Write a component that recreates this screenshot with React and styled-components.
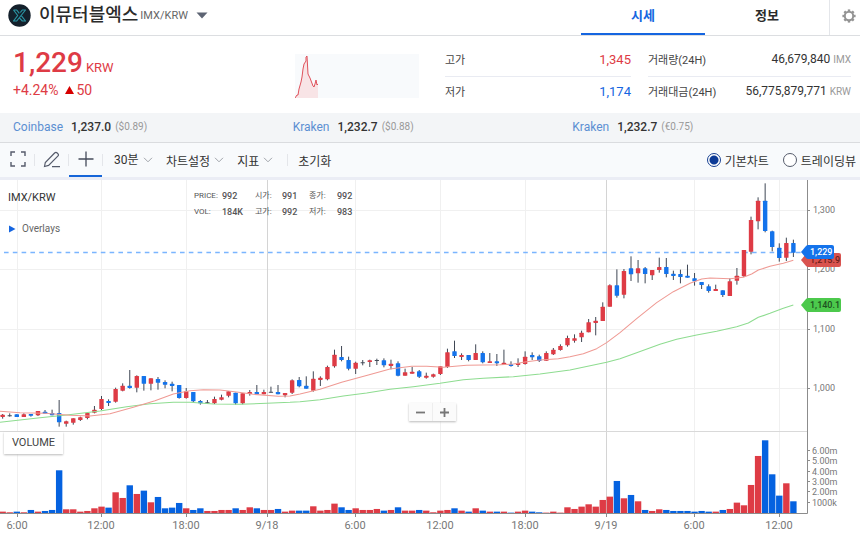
import React, { useState } from 'react'
import styled, { createGlobalStyle } from 'styled-components'

const GlobalStyle = createGlobalStyle`
  * {
    box-sizing: border-box;
  }
  body {
    margin: 0;
    background: #fff;
    color: #333;
    font-family: Roboto, 'Noto Sans CJK KR', sans-serif;
    font-size: 12px;
  }
  h1, dl, dd {
    margin: 0;
  }
  button, select {
    margin: 0;
    padding: 0;
    border: 0;
    background: none;
    color: inherit;
    font: inherit;
    cursor: pointer;
  }
  svg {
    display: block;
  }
`

const UP = '#de3b45'
const DOWN = '#1473eb'

/* header */

const Header = styled.header`
  display: flex;
  height: 36px;
  border-bottom: 1px solid #dcdee1;
`

const Coin = styled.div`
  flex: 1;
  display: flex;
  align-items: center;
  padding: 0 0 5px 8px;
`

const CoinName = styled.h1`
  margin-left: 8px;
  font-size: 18px;
  font-weight: 500;
  line-height: 24px;
  color: #2b2b2b;
`

const CoinPair = styled.span`
  margin: 0 8px 0 2px;
  font-size: 11px;
  color: #666;
`

const Tabs = styled.nav`
  display: flex;
`

const Tab = styled.button`
  width: 124px;
  height: 35px;
  padding-bottom: 4px;
  border-bottom: 2px solid ${({ $active }) => $active ? '#1565e0' : 'transparent'};
  color: ${({ $active }) => $active ? '#1565e0' : '#2b2b2b'};
  font-size: 13px;
  font-weight: 700;
`

const GearButton = styled.button`
  display: flex;
  align-items: center;
  width: 31px;
  padding-left: 12px;
  padding-bottom: 4px;
  border-left: 1px solid #e4e6ea;
`

/* price summary */

const Summary = styled.section`
  display: flex;
  height: 77px;
`

const PriceBlock = styled.div`
  width: 295px;
  padding: 10px 0 0 13px;
  color: ${UP};
`

const Price = styled.div`
  display: flex;
  align-items: baseline;
  gap: 3px;
  height: 33px;
  font-size: 28px;
  line-height: 33px;
  strong {
    font-weight: 500;
  }
  span {
    font-size: 13px;
  }
`

const Change = styled.div`
  display: flex;
  align-items: center;
  gap: 6px;
  font-size: 14px;
  line-height: 22px;
  span {
    display: flex;
    align-items: center;
    gap: 3px;
  }
`

const Spark = styled.div`
  width: 124px;
  height: 44px;
  margin-top: 18px;
  background: #f8fafc;
`

const Stats = styled.dl`
  flex: 1;
  display: grid;
  grid-template-columns: 186fr 203fr;
  grid-template-rows: 33px 28px;
  column-gap: 17px;
  padding: 8px 9px 0 26px;
`

const Stat = styled.div`
  display: flex;
  align-items: center;
  justify-content: space-between;
  padding-bottom: ${({ $line }) => $line ? 2 : 0}px;
  border-bottom: ${({ $line }) => $line ? '1px solid #e9ebf2' : 0};
  dt {
    font-size: 11px;
    color: #444;
  }
  dd {
    font-size: ${({ $color }) => $color ? 13 : 12}px;
    color: ${({ $color }) => $color || '#333'};
  }
  small {
    margin-left: 3px;
    font-size: 10px;
    color: #999;
  }
`

/* other exchanges */

const Exchanges = styled.section`
  display: grid;
  grid-template-columns: repeat(3, 1fr);
  align-items: center;
  height: 30px;
  padding: 0 8px 2px 13px;
  background: #f3f5f7;
  border-bottom: 1px solid #dadcdf;
`

const Exchange = styled.div`
  display: flex;
  align-items: center;
  a {
    margin-right: 8px;
    color: #5b8fd2;
    text-decoration: none;
  }
  b {
    margin-right: 4px;
    font-weight: 500;
  }
  span {
    font-size: 10px;
    color: #999;
  }
`

/* chart toolbar */

const Toolbar = styled.div`
  display: flex;
  justify-content: space-between;
  height: 37px;
  padding: 0 4px 0 1px;
  background: #f8fafc;
  border-bottom: 3px solid #ebedf5;
`

const Tools = styled.div`
  display: flex;
  align-items: center;
`

const IconTool = styled.button`
  display: flex;
  align-items: center;
  justify-content: center;
  width: 33px;
  height: 34px;
  border-bottom: 2px solid ${({ $active }) => $active ? '#1565d8' : 'transparent'};
`

const Divider = styled.i`
  width: 1px;
  height: 12px;
  background: #e4e6ea;
`

const MenuButton = styled.button`
  display: flex;
  align-items: center;
  gap: 4px;
  margin-left: 13px;
`

const Interval = styled.label`
  display: flex;
  align-items: center;
  gap: 4px;
  margin-left: 11px;
  select {
    appearance: none;
  }
`

const ResetButton = styled.button`
  margin-left: 10px;
`

const MenuDivider = styled(Divider)`
  margin-left: 14px;
`

const ChartTypes = styled.div`
  display: flex;
  align-items: center;
  gap: 14px;
`

const Radio = styled.label`
  display: flex;
  align-items: center;
  gap: 4px;
  input {
    appearance: none;
    width: 14px;
    height: 14px;
    margin: 0;
    border: 1px solid #555b6b;
    border-radius: 50%;
    background: #fff;
  }
  input:checked {
    border-color: #174093;
    background: radial-gradient(#0c3a96 4px, #fff 5px);
  }
`

/* chart */

const ChartArea = styled.section`
  position: relative;
  > svg {
    width: 100%;
    height: auto;
  }
`

const ChartInfo = styled.div`
  position: absolute;
  top: 10px;
  left: 8px;
  font-size: 11px;
  line-height: 16px;
  color: #333;
`

const OverlaysButton = styled.button`
  display: flex;
  align-items: center;
  gap: 6px;
  margin-top: 15px;
  font-size: 10px;
  line-height: 16px;
  color: #666;
`

const Quote = styled.dl`
  position: absolute;
  top: 8px;
  left: 194px;
  display: grid;
  grid-template-columns: 28px 33px 27px 27px 28px 20px;
  font-size: 9px;
  line-height: 16px;
  color: #555;
  div {
    display: contents;
  }
  dt {
    font-size: 8px;
  }
  dd {
    font-weight: 500;
  }
`

const ZoomButtons = styled.div`
  position: absolute;
  top: 223px;
  left: 409px;
  display: flex;
  width: 47px;
  height: 18px;
  background: #fbfbfb;
  box-shadow: 0 1px 2px #bbb;
  button {
    flex: 1;
    display: flex;
    align-items: center;
    justify-content: center;
  }
  button + button {
    border-left: 1px solid #eee;
  }
`

const VolumeLabel = styled.div`
  position: absolute;
  top: 252px;
  left: 4px;
  width: 59px;
  background: #fff;
  box-shadow: 0 1px 2px #bbb;
  font-size: 11px;
  line-height: 22px;
  text-align: center;
  color: #444;
`

// [kind, body top, body bottom, high, low, volume], in thirds of a plot unit
// kind: 1 up, 0 down, 2 flat
const candles = [
  [1, 704, 711, 702, 716, 5], [2, 706, 709, 700, 710, 3], [0, 703, 711, 703, 711, 5],
  [1, 703, 711, 700, 711, 3], [0, 702, 707, 702, 710, 10], [1, 693, 706, 693, 708, 5],
  [0, 695, 701, 690, 701, 7], [0, 699, 706, 689, 706, 10], [0, 699, 727, 660, 740, 129],
  [1, 724, 731, 722, 740, 12], [1, 715, 728, 715, 734, 12], [1, 712, 720, 710, 723, 5],
  [1, 699, 714, 699, 718, 7], [1, 689, 698, 678, 700, 15], [1, 657, 687, 648, 690, 20],
  [0, 663, 669, 658, 678, 17], [1, 627, 665, 623, 668, 63], [1, 617, 632, 610, 634, 46],
  [0, 617, 624, 570, 626, 84], [1, 588, 623, 586, 637, 58], [0, 588, 611, 588, 632, 68],
  [1, 595, 611, 595, 631, 33], [0, 597, 608, 591, 629, 49], [0, 606, 614, 601, 625, 15],
  [0, 611, 618, 605, 634, 17], [0, 615, 654, 615, 656, 31], [1, 634, 654, 624, 656, 15],
  [0, 636, 664, 636, 666, 10], [0, 663, 670, 660, 674, 15], [2, 667, 670, 660, 672, 7],
  [1, 657, 670, 650, 672, 7], [1, 652, 659, 644, 661, 10], [1, 634, 647, 633, 652, 10],
  [0, 638, 670, 638, 674, 15], [1, 640, 670, 640, 673, 10], [1, 636, 642, 630, 647, 18],
  [0, 636, 643, 615, 643, 15], [1, 636, 643, 629, 643, 10], [2, 635, 638, 620, 638, 10],
  [0, 636, 643, 615, 643, 13], [1, 639, 646, 639, 652, 5], [1, 601, 638, 598, 642, 8],
  [0, 600, 619, 591, 622, 8], [0, 617, 626, 589, 626, 8], [1, 596, 632, 574, 635, 21],
  [1, 593, 600, 589, 618, 8], [1, 561, 598, 557, 601, 10], [1, 524, 559, 509, 563, 29],
  [0, 531, 540, 498, 544, 18], [0, 540, 566, 530, 571, 10], [1, 548, 566, 545, 582, 15],
  [2, 547, 550, 540, 556, 10], [1, 541, 546, 539, 561, 10], [2, 540, 543, 536, 555, 13],
  [0, 541, 556, 535, 562, 8], [1, 551, 558, 539, 568, 10], [0, 550, 587, 544, 589, 18],
  [1, 577, 587, 566, 587, 8], [1, 575, 581, 561, 581, 8], [0, 574, 590, 570, 594, 10],
  [1, 587, 593, 578, 596, 8], [1, 583, 590, 581, 593, 3], [1, 559, 582, 559, 585, 8],
  [1, 517, 561, 506, 564, 10], [0, 514, 528, 482, 534, 15], [1, 525, 531, 520, 540, 8],
  [0, 525, 540, 525, 544, 5], [1, 519, 540, 493, 540, 15], [0, 519, 547, 514, 550, 8],
  [1, 544, 549, 519, 549, 5], [0, 544, 550, 522, 558, 5], [1, 548, 555, 509, 555, 5],
  [0, 553, 558, 544, 560, 2], [1, 549, 555, 535, 561, 5], [1, 530, 552, 514, 554, 8],
  [0, 525, 532, 517, 540, 5], [0, 529, 543, 524, 546, 3], [1, 519, 542, 514, 542, 2],
  [1, 509, 523, 504, 525, 5], [1, 498, 510, 493, 512, 2], [1, 474, 496, 467, 500, 18],
  [1, 475, 482, 463, 488, 13], [1, 458, 472, 452, 486, 20], [1, 427, 457, 417, 457, 27],
  [1, 422, 429, 411, 466, 20], [1, 380, 423, 367, 423, 40], [1, 316, 380, 313, 380, 50],
  [0, 316, 347, 268, 353, 97], [1, 273, 344, 267, 355, 45], [0, 265, 283, 229, 303, 55],
  [1, 265, 280, 240, 308, 36], [0, 265, 282, 261, 310, 10], [1, 270, 286, 270, 300, 7],
  [1, 261, 270, 233, 278, 12], [0, 261, 282, 234, 292, 10], [0, 281, 288, 272, 300, 7],
  [0, 282, 291, 269, 310, 7], [0, 287, 293, 254, 293, 7], [0, 295, 304, 279, 317, 5],
  [0, 306, 315, 306, 327, 7], [0, 319, 333, 313, 338, 5], [1, 327, 333, 314, 333, 5],
  [0, 331, 345, 331, 351, 10], [1, 304, 348, 295, 348, 13], [1, 287, 302, 264, 314, 32],
  [1, 210, 289, 210, 291, 24], [1, 120, 215, 110, 223, 85], [1, 62, 124, 52, 148, 172],
  [0, 62, 153, 10, 157, 219], [0, 154, 201, 152, 214, 117], [0, 203, 234, 190, 245, 53],
  [1, 189, 233, 173, 243, 90], [0, 189, 218, 179, 231, 36]
]

const shortAverage = '0,694 60,698 135,700 210,706 270,708 330,701 400,682 465,662 520,642 570,632 610,629 660,630 710,636 760,643 835,649 870,648 900,642 960,628 1025,607 1105,585 1170,567 1235,559 1280,559 1330,562 1400,556 1500,554 1540,552 1575,546 1620,540 1675,536 1710,530 1750,521 1790,506 1820,488 1860,458 1910,416 1970,368 2020,335 2070,310 2105,297 2130,294 2190,296 2230,292 2255,282 2275,270 2310,259 2350,250 2380,241'
const longAverage = '0,727 120,713 200,705 300,693 380,680 450,671 520,667 570,667 640,672 720,673 800,670 870,667 900,665 960,659 1030,648 1100,639 1170,628 1240,620 1320,610 1390,599 1450,595 1540,590 1620,582 1710,570 1820,547 1860,536 1910,518 1980,493 2030,478 2090,465 2150,454 2210,440 2245,429 2275,412 2310,400 2350,385 2380,375'

const priceTicks = [['1,300', 30], ['1,200', 89], ['1,100', 149], ['1,000', 208]]
const volumeTicks = [['6.00m', 271], ['5.00m', 281], ['4.00m', 292], ['3.00m', 302], ['2.00m', 312], ['1000k', 323]]
const timeTicks = [
  ['6:00', 17], ['12:00', 101], ['18:00', 186], ['9/18', 267, true], ['6:00', 355],
  ['12:00', 440], ['18:00', 525], ['9/19', 606, true], ['6:00', 694], ['12:00', 779]
]

const AxisText = styled.text`
  font-size: ${({ $size }) => $size || 9}px;
  fill: #777;
`

const TagText = styled.text`
  font-size: 9px;
  font-weight: 500;
  fill: ${({ $color }) => $color};
`

function Candle ({ x, candle }) {
  const [kind, top, bottom, high, low] = candle
  const color = kind === 2 ? '#444c58' : kind === 1 ? UP : DOWN
  return (
    <g>
      <path d={`M${x} ${high / 3}V${low / 3}`} stroke='#3f4754' />
      <rect x={x - 2.2} y={top / 3} width='4.4' height={(bottom - top) / 3} rx='.5' fill={color} />
    </g>
  )
}

function PriceTag ({ y, width, color, textColor, children }) {
  return (
    <g>
      <path d={`M801 ${y}l5-6q1-1 2-1h${width - 9}q2 0 2 2v10q0 2-2 2h-${width - 9}q-1 0-2-1z`} fill={color} />
      <TagText x='810' y={y + 3} $color={textColor}>{children}</TagText>
    </g>
  )
}

function PriceChart () {
  return (
    <svg viewBox='0 0 860 355' role='img' aria-label='IMX/KRW'>
      {priceTicks.map(([label, y]) => (
        <path key={label} d={`M0 ${y + 0.5}H807`} stroke='#f0f0f0' />
      ))}
      {timeTicks.map(([label, x, day]) => (
        <path key={x} d={`M${x + 0.5} 0V333`} stroke={day ? '#d4d4d4' : '#f0f0f0'} />
      ))}
      <path d='M0 251.5H807' stroke='#d9d9d9' />
      <path d='M4 72.5H807' stroke='#7ab5ff' strokeWidth='1.4' strokeDasharray='4.6 4.2' />
      {candles.map((candle, i) => {
        const x = 2.67 + i * 7.06
        return (
          <g key={i}>
            <rect
              x={x - 3.2}
              y={333.3 - candle[5] / 3}
              width='6.4'
              height={candle[5] / 3}
              fill={candle[0] ? '#de3b45' : '#0562e0'}
            />
            <Candle x={x} candle={candle} />
          </g>
        )
      })}
      <g transform='scale(.33333)' fill='none' strokeWidth='3.2' strokeLinejoin='round'>
        <polyline points={longAverage} stroke='#8edc90' />
        <polyline points={shortAverage} stroke='#ef9a94' />
      </g>
      <path d='M0 333.5H807.5V0' fill='none' stroke='#8c8c8c' />
      {priceTicks.map(([label, y]) => (
        <g key={label}>
          <path d={`M807 ${y + 0.5}h3`} stroke='#8c8c8c' />
          <AxisText x='813' y={y + 3}>{label}</AxisText>
        </g>
      ))}
      {volumeTicks.map(([label, y]) => (
        <g key={label}>
          <path d={`M807 ${y - 0.5}h3`} stroke='#8c8c8c' />
          <AxisText x='812' y={y + 3}>{label}</AxisText>
        </g>
      ))}
      {timeTicks.map(([label, x]) => (
        <g key={x}>
          <path d={`M${x + 0.5} 333v4`} stroke='#8c8c8c' />
          <AxisText x={x} y='349' textAnchor='middle' $size={11}>{label}</AxisText>
        </g>
      ))}
      <PriceTag y={80} width={40} color='#d9534f' textColor='#6b1f1c'>1,215.9</PriceTag>
      <PriceTag y={72} width={33} color='#1473eb' textColor='#fff'>1,229</PriceTag>
      <PriceTag y={125} width={40} color='#4cc94c' textColor='#1d5220'>1,140.1</PriceTag>
    </svg>
  )
}

function CoinLogo () {
  return (
    <svg width='23' height='23' viewBox='0 0 23 23' aria-hidden='true'>
      <circle cx='11.5' cy='11.5' r='11.2' fill='#14202b' />
      <g fill='none' stroke='#2a93a3' strokeWidth='1.2' strokeLinejoin='round'>
        <path d='M5.5 6h3.2l2.6 3.4M5.5 6l4.2 5.5-4.2 5.5h3.2l8.8-11h-3.2l-2 2.5' />
        <path d='M11.4 13.8l2.9 3.2h3.2l-4.2-5.3' />
      </g>
    </svg>
  )
}

function GearIcon () {
  return (
    <svg width='14' height='14' viewBox='0 0 14 14' fill='none' stroke='#949494' aria-hidden='true'>
      <circle cx='7' cy='7' r='4.2' strokeWidth='2' />
      {[0, 45, 90, 135, 180, 225, 270, 315].map(angle => (
        <path key={angle} d='M7 2.6V.4' strokeWidth='2.4' transform={`rotate(${angle} 7 7)`} />
      ))}
    </svg>
  )
}

function Chevron () {
  return (
    <svg width='10' height='6' viewBox='0 0 10 6' fill='none' stroke='#a0a4aa' aria-hidden='true'>
      <path d='M1 .8l4 4 4-4' />
    </svg>
  )
}

export default function App () {
  const [tab, setTab] = useState('시세')
  const [chartType, setChartType] = useState('기본차트')

  return (
    <main>
      <GlobalStyle />
      <Header>
        <Coin>
          <CoinLogo />
          <CoinName>이뮤터블엑스</CoinName>
          <CoinPair>IMX/KRW</CoinPair>
          <button aria-label='코인 선택'>
            <svg width='12' height='7' viewBox='0 0 12 7'><path d='M.5.5h11L6 6.5z' fill='#5d6473' /></svg>
          </button>
        </Coin>
        <Tabs>
          {['시세', '정보'].map(name => (
            <Tab key={name} $active={tab === name} onClick={() => setTab(name)}>{name}</Tab>
          ))}
          <GearButton aria-label='설정'><GearIcon /></GearButton>
        </Tabs>
      </Header>

      <Summary>
        <PriceBlock>
          <Price><strong>1,229</strong><span>KRW</span></Price>
          <Change>
            +4.24%
            <span>
              <svg width='9' height='8' viewBox='0 0 9 8'><path d='M4.5 0L9 8H0z' fill='#d60000' /></svg>
              50
            </span>
          </Change>
        </PriceBlock>
        <Spark>
          <svg width='124' height='44' viewBox='0 0 124 44' aria-hidden='true'>
            <path d='M0 44l2-3h1l1-6 2-7 1-5 1-8 1-5 2-3V3l1-1 1 18 2 4 3 8 1 1 1-3 1-4 1 5 1-1v15z' fill='#f8e4e6' />
            <path d='M0 44l2-3h1l1-6 2-7 1-5 1-8 1-5 2-3V3l1-1 1 18 2 4 3 8 1 1 1-3 1-4 1 5 1-1' fill='none' stroke='#e0525c' strokeLinejoin='round' />
          </svg>
        </Spark>
        <Stats>
          <Stat $line $color={UP}><dt>고가</dt><dd>1,345</dd></Stat>
          <Stat $line><dt>거래량(24H)</dt><dd>46,679,840<small>IMX</small></dd></Stat>
          <Stat $color='#1565e0'><dt>저가</dt><dd>1,174</dd></Stat>
          <Stat><dt>거래대금(24H)</dt><dd>56,775,879,771<small>KRW</small></dd></Stat>
        </Stats>
      </Summary>

      <Exchanges>
        <Exchange><a href='#coinbase'>Coinbase</a><b>1,237.0</b><span>($0.89)</span></Exchange>
        <Exchange><a href='#kraken-usd'>Kraken</a><b>1,232.7</b><span>($0.88)</span></Exchange>
        <Exchange><a href='#kraken-eur'>Kraken</a><b>1,232.7</b><span>(€0.75)</span></Exchange>
      </Exchanges>

      <Toolbar>
        <Tools>
          <IconTool aria-label='전체화면'>
            <svg width='16' height='16' viewBox='0 0 16 16' fill='none' stroke='#555b6b' strokeWidth='1.4'>
              <path d='M1 5V1h4M11 1h4v4M15 11v4h-4M5 15H1v-4' />
            </svg>
          </IconTool>
          <Divider />
          <IconTool aria-label='그리기'>
            <svg width='17' height='17' viewBox='0 0 17 17' fill='none' stroke='#555b6b' strokeWidth='1.2'>
              <path d='M1.5 15.5l.8-4L11.6 2q1.3-1.3 2.6 0l.6.6q1.3 1.3 0 2.6l-9.2 9.2zM9 15.7h8' />
            </svg>
          </IconTool>
          <Divider />
          <IconTool $active aria-label='십자선'>
            <svg width='16' height='16' viewBox='0 0 16 16' fill='none' stroke='#444b5a' strokeWidth='1.3'>
              <path d='M8 .5v15M.5 8h15' />
            </svg>
          </IconTool>
          <Divider />
          <Interval>
            <select aria-label='시간 간격'>
              <option>30분</option>
            </select>
            <Chevron />
          </Interval>
          <MenuButton aria-haspopup='menu'>차트설정<Chevron /></MenuButton>
          <MenuButton aria-haspopup='menu'>지표<Chevron /></MenuButton>
          <MenuDivider />
          <ResetButton>초기화</ResetButton>
        </Tools>
        <ChartTypes>
          {['기본차트', '트레이딩뷰'].map(name => (
            <Radio key={name}>
              <input
                type='radio'
                name='chart-type'
                checked={chartType === name}
                onChange={() => setChartType(name)}
              />
              {name}
            </Radio>
          ))}
        </ChartTypes>
      </Toolbar>

      <ChartArea>
        <PriceChart />
        <ChartInfo>
          IMX/KRW
          <OverlaysButton>
            <svg width='8' height='8' viewBox='0 0 8 8'><path d='M1 .5l6.5 3.5L1 7.5z' fill='#1565e0' /></svg>
            Overlays
          </OverlaysButton>
        </ChartInfo>
        <Quote>
          <div><dt>PRICE:</dt><dd>992</dd></div>
          <div><dt>시가:</dt><dd>991</dd></div>
          <div><dt>종가:</dt><dd>992</dd></div>
          <div><dt>VOL:</dt><dd>184K</dd></div>
          <div><dt>고가:</dt><dd>992</dd></div>
          <div><dt>저가:</dt><dd>983</dd></div>
        </Quote>
        <ZoomButtons>
          <button aria-label='축소'>
            <svg width='9' height='9' viewBox='0 0 9 9' stroke='#777' strokeWidth='1.8'><path d='M0 4.5h9' /></svg>
          </button>
          <button aria-label='확대'>
            <svg width='9' height='9' viewBox='0 0 9 9' stroke='#777' strokeWidth='1.8'><path d='M0 4.5h9M4.5 0v9' /></svg>
          </button>
        </ZoomButtons>
        <VolumeLabel>VOLUME</VolumeLabel>
      </ChartArea>
    </main>
  )
}
